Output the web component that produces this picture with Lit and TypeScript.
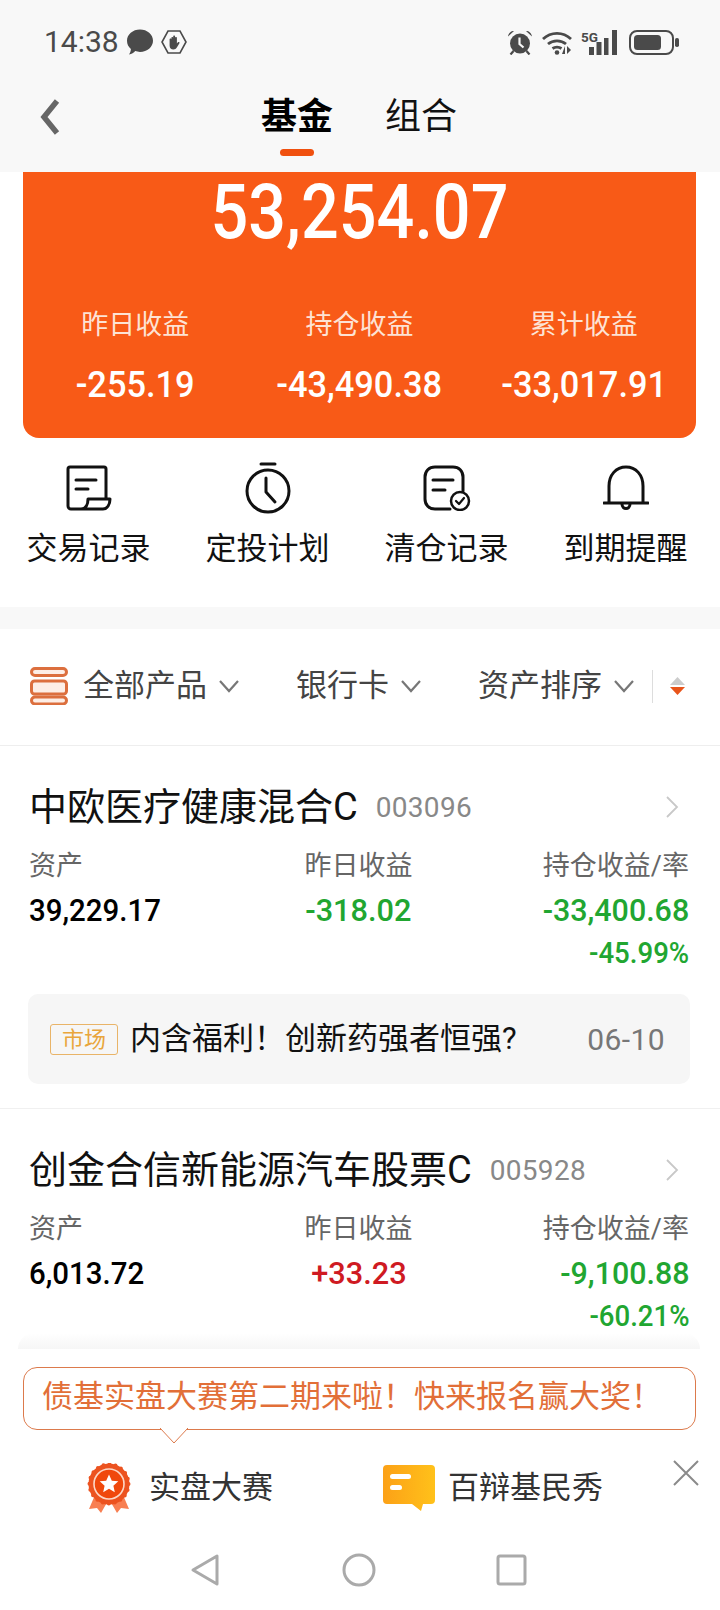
import { LitElement, html, css, svg } from "lit";
import { customElement } from "lit/decorators.js";

const funds = [
  {
    name: "中欧医疗健康混合C",
    code: "003096",
    asset: "39,229.17",
    day: "-318.02",
    dayUp: false,
    hold: "-33,400.68",
    rate: "-45.99%",
    news: true,
  },
  {
    name: "创金合信新能源汽车股票C",
    code: "005928",
    asset: "6,013.72",
    day: "+33.23",
    dayUp: true,
    hold: "-9,100.88",
    rate: "-60.21%",
    news: false,
  },
];

const chevron = svg`<path d="M2 2l9 10 9-10" fill="none" stroke="#777" stroke-width="2.2"/>`;

@customElement("app-root")
export class AppRoot extends LitElement {
  static styles = css`
    :host {
      display: block;
      position: relative;
      width: 720px;
      height: 1610px;
      overflow: hidden;
      background: #fff;
      font-family: Roboto, "Noto Sans CJK SC", sans-serif;
      color: #000;
    }
    .head { height: 172px; background: #f8f8f8; }
    .status {
      height: 84px;
      padding: 0 41px 0 44px;
      box-sizing: border-box;
      display: flex;
      align-items: center;
      color: #4a4a4a;
    }
    .time { font-size: 30px; width: 83px; line-height: 1; }
    .status svg { display: block; }
    .status .right { margin-left: auto; display: flex; align-items: center; }
    .nav { display: flex; align-items: center; height: 62px; padding: 4px 0 0 40px; box-sizing: border-box; }
    .back { width: 20px; height: 38px; margin-right: 201px; }
    .tab { font-size: 36px; line-height: 44px; margin-right: 52px; color: #111; }
    .tab.on { font-weight: 700; color: #000; position: relative; }
    .tab.on::after {
      content: "";
      position: absolute;
      left: 19px;
      top: 54px;
      width: 34px;
      height: 7px;
      border-radius: 4px;
      background: #f0500f;
    }

    .card {
      margin: 0 24px 0 23px;
      height: 266px;
      background: #f85a17;
      border-radius: 0 0 16px 16px;
      color: #fff;
      text-align: center;
    }
    .total { font-size: 76px; font-weight: 500; line-height: 80px; transform: scaleX(0.875); }
    .stats { display: grid; grid-template-columns: repeat(3, 1fr); padding-top: 53px; }
    .stats .k { font-size: 27px; line-height: 40px; color: #fde3d4; }
    .stats .v { font-size: 37px; font-weight: 500; line-height: 40px; margin-top: 20px; transform: scaleX(0.93); }

    .shortcuts {
      display: grid;
      grid-template-columns: repeat(4, 179px);
      height: 169px;
      margin-left: -1px;
      text-align: center;
      font-size: 31px;
      color: #111;
    }
    .ico { height: 52px; margin-top: 24px; display: flex; align-items: center; justify-content: center; }
    .shortcuts span { display: block; line-height: 40px; margin-top: 15px; }
    .band { height: 22px; background: #f8f8f8; }

    .filter {
      height: 117px;
      border-bottom: 1px solid #eee;
      display: flex;
      align-items: center;
      padding: 0 0 2px 30px;
      box-sizing: border-box;
      font-size: 31px;
      color: #444;
    }
    .filter .txt { line-height: 40px; }
    .filter .chev { margin-left: 11px; }
    .sep { width: 1px; height: 33px; background: #ddd; }

    .fund { padding: 36px 31px 0 29px; }
    .fund.open { height: 363px; box-sizing: border-box; border-bottom: 1px solid #f0f0f0; }
    .title { display: flex; align-items: center; height: 50px; }
    .name { font-size: 38px; line-height: 50px; color: #111; }
    .code { font-size: 28px; color: #888; margin-left: 18px; letter-spacing: 0.3px; }
    .go { margin-left: auto; margin-right: 10px; }
    .cols {
      display: grid;
      grid-template-columns: 1fr auto 1fr;
      margin-top: 16px;
    }
    .cols .k { font-size: 27px; line-height: 36px; color: #666; }
    .cols .v { font-size: 32px; font-weight: 500; line-height: 44px; margin-top: 4px; transform: scaleX(0.92); transform-origin: left; }
    .mid { text-align: center; margin-right: 1px; }
    .cols .mid .v { transform-origin: center; transform: scaleX(0.96); }
    .end { text-align: right; }
    .cols .end .v { transform-origin: right; transform: scaleX(0.95); }
    .cols .end .rate { transform-origin: right; }
    .cols .rate { font-size: 30px; font-weight: 500; line-height: 42px; transform: scaleX(0.92); }
    .g { color: #21a631; }
    .r { color: #cf1a22; }
    .news {
      margin: 20px -1px 0 -1px;
      height: 90px;
      border-radius: 10px;
      background: #f6f6f6;
      display: flex;
      align-items: center;
      padding: 0 25px 0 22px;
    }
    .tag {
      width: 68px;
      height: 31px;
      box-sizing: border-box;
      border: 1px solid #e9b468;
      border-radius: 3px;
      font-size: 22px;
      line-height: 29px;
      text-align: center;
      color: #e9a63c;
      flex: none;
    }
    .news .t { font-size: 31px; line-height: 40px; margin-left: 12px; color: #111; }
    .news .d { font-size: 30px; color: #777; margin-left: auto; letter-spacing: 0.4px; }

    .sheet {
      position: absolute;
      left: 0;
      right: 0;
      top: 1349px;
      bottom: 0;
      background: #fff;
    }
    .sheet::before {
      content: "";
      position: absolute;
      left: 18px;
      right: 20px;
      top: -16px;
      height: 16px;
      border-radius: 20px 20px 0 0;
      background: linear-gradient(#fff, #f6f6f6);
    }
    .bubble {
      position: absolute;
      left: 23px;
      top: 18px;
      width: 673px;
      height: 63px;
      box-sizing: border-box;
      border: 1px solid #dc7a4c;
      border-radius: 14px;
      padding-left: 18px;
      font-size: 31px;
      line-height: 58px;
      color: #e26f38;
      white-space: nowrap;
    }
    .tail { position: absolute; left: 160px; top: 79px; }
    .promo { position: absolute; left: 87px; top: 111px; display: flex; align-items: center; gap: 18px; height: 56px; }
    .promo.two { left: 382px; gap: 12px; }
    .promo span { font-size: 31px; color: #333; line-height: 40px; }
    .close { position: absolute; left: 673px; top: 111px; }
    .bar { position: absolute; left: 0; right: 0; top: 204px; display: flex; height: 34px; align-items: center; }
    .bar svg { position: absolute; top: 0; }
  `;

  renderFund(f: (typeof funds)[number]) {
    return html`
      <div class="fund ${f.news ? "open" : ""}">
        <div class="title">
          <div class="name">${f.name}</div>
          <div class="code">${f.code}</div>
          <svg class="go" width="14" height="24" viewBox="0 0 14 24"><path d="M2 2l10 10-10 10" fill="none" stroke="#c8c8c8" stroke-width="1.800"/></svg>
        </div>
        <div class="cols">
          <div>
            <div class="k">资产</div>
            <div class="v">${f.asset}</div>
          </div>
          <div class="mid">
            <div class="k">昨日收益</div>
            <div class="v ${f.dayUp ? "r" : "g"}">${f.day}</div>
          </div>
          <div class="end">
            <div class="k">持仓收益/率</div>
            <div class="v g">${f.hold}</div>
            <div class="rate g">${f.rate}</div>
          </div>
        </div>
        ${f.news
          ? html`<div class="news">
              <div class="tag">市场</div>
              <div class="t">内含福利！创新药强者恒强?</div>
              <div class="d">06-10</div>
            </div>`
          : ""}
      </div>
    `;
  }

  render() {
    return html`
      <div class="head">
        <div class="status">
          <span class="time">14:38</span>
          <svg width="26" height="26" viewBox="0 0 26 26"><path d="M13 .5c7.200 0 13 4.900 13 11.200 0 6.200-5.800 11.200-13 11.200-1.700 0-3.300-.3-4.800-.8C6.800 23.700 4.700 25.300 2 25.500c1.100-1.600 1.800-3.400 1.900-5.500C1.500 18 0 15 0 11.700 0 5.400 5.800.5 13 .5z" fill="#4a4a4a"/></svg>
          <svg style="margin-left:8px" width="26" height="24" viewBox="0 0 26 24"><path d="M7 1h12l6 11-6 11H7L1 12z" fill="none" stroke="#4a4a4a" stroke-width="1.600"/><path d="M8.600 12.500V9.500c0-1.300 1.800-1.300 1.800 0V8c0-1.400 1.800-1.400 1.800 0V6.500c0-1.400 1.900-1.400 1.900 0V8c0-1.400 1.800-1.400 1.800 0v5.500l1-1.200c.8-.9 2.100 0 1.500 1l-2.400 4C15 19 14 19.500 12.500 19.500 10 19.500 8.600 18 8.600 15.500z" fill="#4a4a4a"/></svg>
          <div class="right">
            <svg width="26" height="25" viewBox="0 0 26 25"><circle cx="13" cy="13.500" r="10" fill="#4a4a4a"/><path d="M12.500 7.500v6.500l4 3.500" fill="none" stroke="#f8f8f8" stroke-width="2.200"/><path d="M1 6.500C1.500 3 4 1 7 1zM25 6.500C24.500 3 22 1 19 1z" fill="#4a4a4a"/><path d="M6.500 21l-3 3.500M19.500 21l3 3.500" stroke="#4a4a4a" stroke-width="2.200"/></svg>
            <svg style="margin-left:9px" width="31" height="25" viewBox="0 0 31 25" fill="none" stroke="#4a4a4a" stroke-width="2.800"><path d="M1 9c8-7.500 20-7.500 28 0M6 14c5-4.300 13-4.300 18 0M10.500 18.500c2.500-1.700 6.500-1.700 9 0"/><circle cx="15" cy="22.500" r="2.300" fill="#4a4a4a" stroke="none"/><path d="M23 16v8h-3zM25 16l4 4-4 4z" fill="#4a4a4a" stroke="none"/></svg>
            <svg style="margin-left:8px" width="37" height="25" viewBox="0 0 37 25"><text x="0" y="12" font-size="13.500" font-weight="700" font-family="Roboto" fill="#4a4a4a">5G</text><path d="M8 17h5v8H8zM15.500 12h5v13h-5zM23 8h4.500v17H23zM31 0h5v25h-5z" fill="#4a4a4a"/></svg>
            <svg style="margin-left:11px" width="50" height="25" viewBox="0 0 50 25"><rect x="1" y="1" width="43" height="23" rx="7" fill="none" stroke="#4a4a4a" stroke-width="2"/><rect x="5" y="5" width="27" height="15" rx="3.500" fill="#4a4a4a"/><rect x="46" y="8" width="4" height="9" rx="1.800" fill="#4a4a4a"/></svg>
          </div>
        </div>
        <div class="nav">
          <svg class="back" viewBox="0 0 20 38"><path d="M17 3L4 19l13 16" fill="none" stroke="#666" stroke-width="5.500"/></svg>
          <div class="tab on">基金</div>
          <div class="tab">组合</div>
        </div>
      </div>

      <div class="card">
        <div class="total">53,254.07</div>
        <div class="stats">
          <div><div class="k">昨日收益</div><div class="v">-255.19</div></div>
          <div><div class="k">持仓收益</div><div class="v">-43,490.38</div></div>
          <div><div class="k">累计收益</div><div class="v">-33,017.91</div></div>
        </div>
      </div>

      <div class="shortcuts">
        <div>
          <div class="ico"><svg width="46" height="46" viewBox="0 0 46 46" fill="none" stroke="#111" stroke-width="3" stroke-linejoin="round" stroke-linecap="round"><path d="M22 44H5a3 3 0 0 1-3-3V4a2 2 0 0 1 2-2h34a2 2 0 0 1 2 2v29M10 15h20M10 24h12M44 34H22c0 5-2 10-7 10h22c4 0 7-4 7-10z"/></svg></div>
          <span>交易记录</span>
        </div>
        <div>
          <div class="ico"><svg width="46" height="52" viewBox="0 0 46 52" fill="none" stroke="#111" stroke-width="3" stroke-linecap="round" stroke-linejoin="round"><path d="M16 2h14"/><circle cx="23" cy="29" r="21"/><path d="M21 16v14l9 10"/></svg></div>
          <span>定投计划</span>
        </div>
        <div>
          <div class="ico"><svg width="48" height="46" viewBox="0 0 48 46" fill="none" stroke="#111" stroke-width="3" stroke-linecap="round" stroke-linejoin="round"><path d="M27 44H12C6 44 2 40 2 34V12C2 6 6 2 12 2h18c6 0 10 4 10 10v14M10 15h20M10 25h12"/><circle cx="37" cy="36" r="9" stroke-width="2.500"/><path d="M33 36l3 3 5-6" stroke-width="2.200"/></svg></div>
          <span>清仓记录</span>
        </div>
        <div>
          <div class="ico"><svg width="46" height="46" viewBox="0 0 46 46" fill="none" stroke="#111" stroke-width="3" stroke-linecap="round"><path d="M6 38V21C6 10 13 2 23 2s17 8 17 19v17M1 38h44"/><path d="M19 39c0 6 8 6 8 0"/></svg></div>
          <span>到期提醒</span>
        </div>
      </div>
      <div class="band"></div>

      <div class="filter">
        <svg width="38" height="38" viewBox="0 0 38 38" fill="#fdeee6" stroke="#dc6f3e" stroke-width="3"><rect x="1.500" y="1.500" width="35" height="7" rx="3.500"/><rect x="1.500" y="14" width="35" height="13" rx="3"/><rect x="1.500" y="30" width="35" height="7" rx="3.500"/></svg>
        <span class="txt" style="margin-left:15px">全部产品</span>
        <svg class="chev" width="22" height="14" viewBox="0 0 22 14">${chevron}</svg>
        <span class="txt" style="margin-left:56px">银行卡</span>
        <svg class="chev" width="22" height="14" viewBox="0 0 22 14">${chevron}</svg>
        <span class="txt" style="margin-left:56px">资产排序</span>
        <svg class="chev" width="22" height="14" viewBox="0 0 22 14">${chevron}</svg>
        <div class="sep" style="margin-left:17px"></div>
        <svg style="margin-left:17px" width="15" height="18" viewBox="0 0 15 18"><path d="M7.500 0L15 8H0z" fill="#ccc"/><path d="M0 10h15l-7.500 8z" fill="#e8541a"/></svg>
      </div>

      ${funds.map((f) => this.renderFund(f))}

      <div class="sheet">
        <div class="bubble">债基实盘大赛第二期来啦！快来报名赢大奖！</div>
        <svg class="tail" width="28" height="16" viewBox="0 0 28 16"><path d="M0 0l14 15L28 0" fill="#fff" stroke="#dc7a4c" stroke-width="1"/></svg>
        <div class="promo">
          <svg width="44" height="50" viewBox="0 0 44 50"><path d="M8 32L2 46l8-1 4 5 8-14 8 14 4-5 8 1-6-14z" fill="#f87f52"/><circle cx="22" cy="21" r="19" fill="#ec5320" stroke="#ec5320" stroke-width="3"/><circle cx="22" cy="21" r="19.500" fill="none" stroke="#ec5320" stroke-width="4" stroke-linecap="round" stroke-dasharray="0 6.120"/><circle cx="22" cy="21" r="15" fill="#f0480c" stroke="#fcd7c6" stroke-width="1.600"/><path d="M22 11.500l2.800 6.200 6.500.6-4.900 4.400 1.400 6.500-5.800-3.400-5.800 3.400 1.400-6.500-4.900-4.400 6.500-.6z" fill="#fff"/></svg>
          <span>实盘大赛</span>
        </div>
        <div class="promo two">
          <svg width="54" height="48" viewBox="0 0 54 48"><defs><linearGradient id="y" x1="0" x2="1"><stop offset="0" stop-color="#fca117"/><stop offset="1" stop-color="#ffc11a"/></linearGradient></defs><path d="M5 1h44a4 4 0 0 1 4 4v31a4 4 0 0 1-4 4H41l-2 7-9-7H5a4 4 0 0 1-4-4V5a4 4 0 0 1 4-4z" fill="url(#y)"/><rect x="8" y="10" width="21" height="5" rx="2.500" fill="#fff"/><rect x="8" y="21" width="12" height="5" rx="2.500" fill="#fff"/></svg>
          <span>百辩基民秀</span>
        </div>
        <svg class="close" width="26" height="26" viewBox="0 0 26 26"><path d="M1 1l24 24M25 1L1 25" stroke="#8a8a8a" stroke-width="2"/></svg>
        <div class="bar">
          <svg style="left:190px" width="30" height="34" viewBox="0 0 30 34"><path d="M27 3v28L3 17z" fill="none" stroke="#aaa" stroke-width="3" stroke-linejoin="round"/></svg>
          <svg style="left:342px" width="34" height="34" viewBox="0 0 34 34"><circle cx="17" cy="17" r="15" fill="none" stroke="#aaa" stroke-width="3"/></svg>
          <svg style="left:496px" width="31" height="34" viewBox="0 0 31 34"><rect x="2" y="3" width="27" height="28" rx="2" fill="none" stroke="#aaa" stroke-width="3"/></svg>
        </div>
      </div>
    `;
  }
}
